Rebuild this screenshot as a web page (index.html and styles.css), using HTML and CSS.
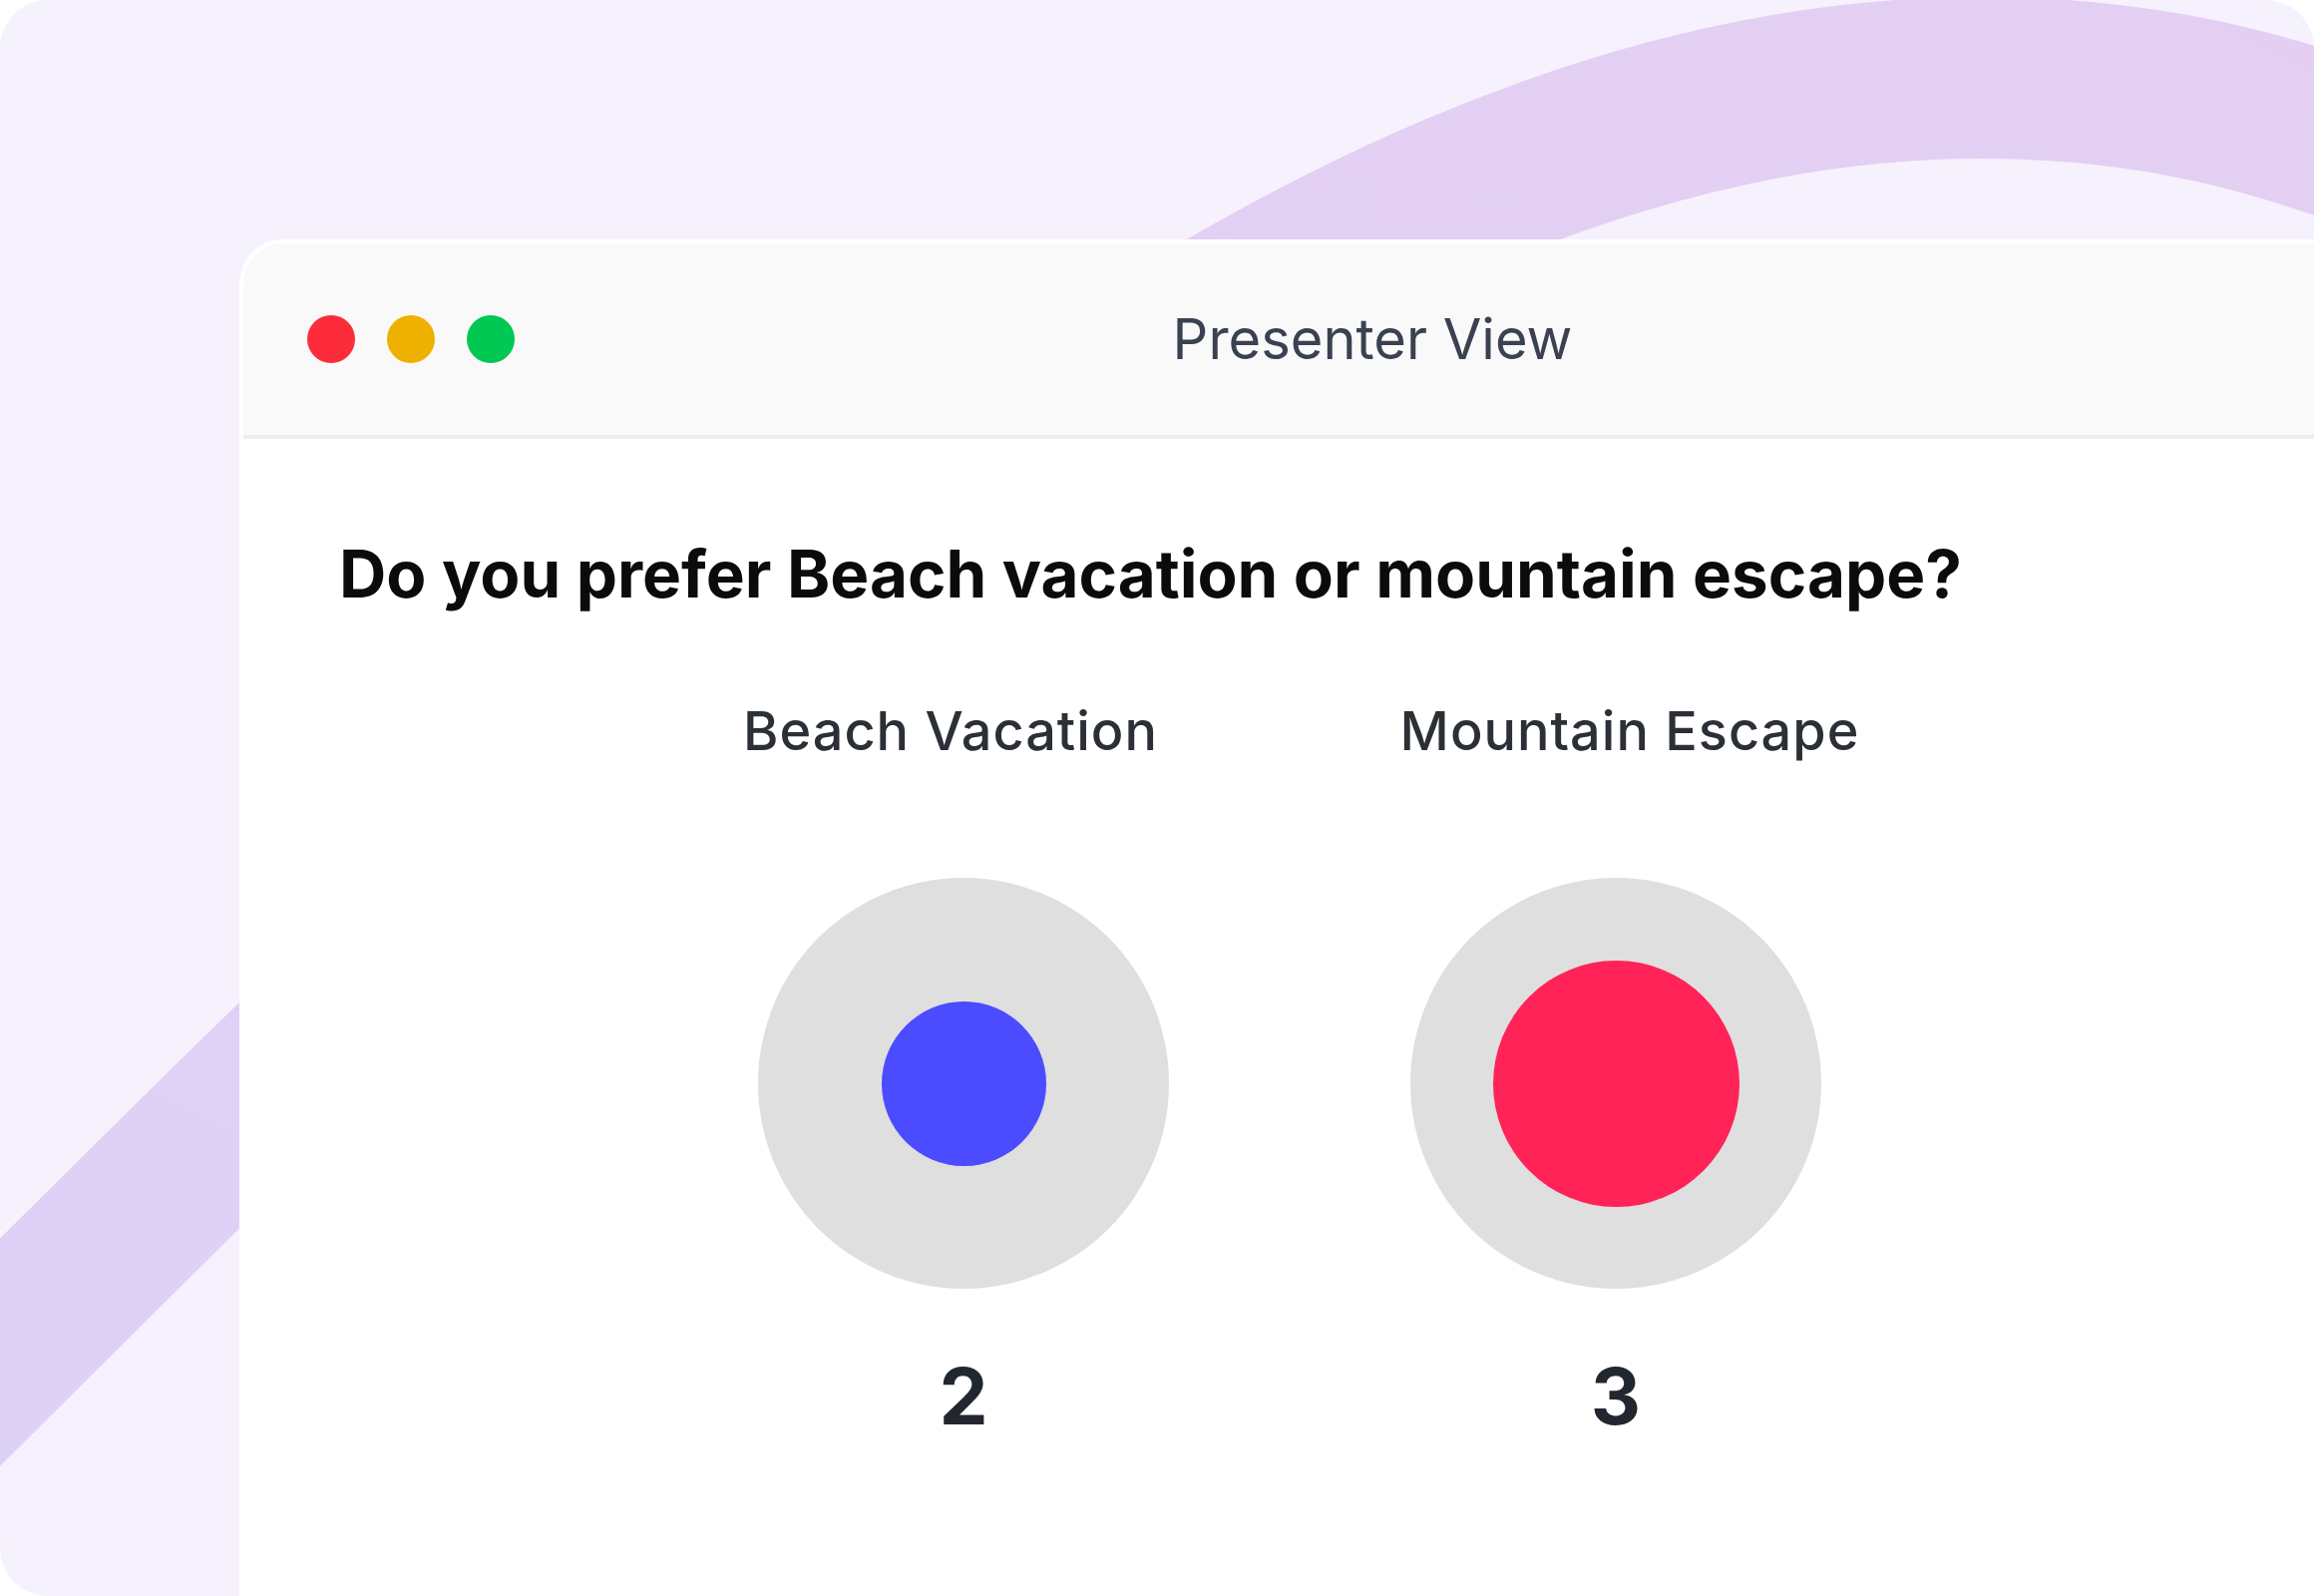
FILE: index.html
```html
<!DOCTYPE html>
<html lang="en">

<head>
	<title>Presenter View</title>
	<meta charset="utf-8" />
	<meta name="viewport" content="width=device-width,initial-scale=1" />
	<link rel="stylesheet" href="styles.css">
</head>

<body>
	<div class="frame">
		<svg class="backdrop" viewBox="0 0 2320 1600" aria-hidden="true">
			<defs>
				<linearGradient id="band" x1="0" y1="1" x2="1" y2="0">
					<stop offset="0" stop-color="#ded1f6" />
					<stop offset="1" stop-color="#e4cff2" />
				</linearGradient>
			</defs>
			<path d="M -100 1455 C 500 862, 1230 78, 1985 78 C 2150 78, 2300 108, 2520 210"
				fill="none" stroke="url(#band)" stroke-width="162" />
		</svg>

		<div class="window">
			<div class="titlebar">
				<div class="lights">
					<span class="light red"></span>
					<span class="light yellow"></span>
					<span class="light green"></span>
				</div>
				<div class="title">Presenter View</div>
				<div></div>
			</div>

			<div class="content">
				<h1 class="question">Do you prefer Beach vacation or mountain escape?</h1>

				<div class="labels">
					<div class="label">Beach Vacation</div>
					<div class="label">Mountain Escape</div>
				</div>

				<div class="results">
					<div class="option">
						<div class="ring">
							<div class="dot blue" style="width: 165px; height: 165px;"></div>
						</div>
						<div class="count">2</div>
					</div>
					<div class="option">
						<div class="ring">
							<div class="dot pink" style="width: 247px; height: 247px;"></div>
						</div>
						<div class="count">3</div>
					</div>
				</div>
			</div>
		</div>
	</div>
</body>

</html>
```

FILE: styles.css
```css
:root {
	--page-bg: #f6f2fd;
	--bar-bg: #f9f9f9;
	--line: #eeeeee;
	--ring: #dfdfdf;
	--text: #0b0b0c;
	--muted: #3a4150;
	--font: Inter, "Noto Sans", "DejaVu Sans", sans-serif;
}

*,
*:before,
*:after {
	box-sizing: border-box;
	margin: 0;
	padding: 0;
}

body {
	background-color: #ffffff;
	font-family: var(--font);
	color: var(--text);
}

.frame {
	position: relative;
	width: 2320px;
	height: 1600px;
	padding: 240px 0 0 240px;
	border-radius: 48px 48px 0 48px;
	background-color: var(--page-bg);
	overflow: hidden;
}

.backdrop {
	position: absolute;
	top: 0;
	left: 0;
	width: 2320px;
	height: 1600px;
}

.window {
	position: relative;
	width: 2268px;
	min-height: 1420px;
	border: 4px solid #ffffff;
	border-right: 0;
	border-radius: 44px 0 0 0;
	background-color: #ffffff;
}

.titlebar {
	display: grid;
	grid-template-columns: 1fr auto 1fr;
	align-items: center;
	height: 196px;
	padding: 0 64px;
	border-bottom: 4px solid var(--line);
	border-radius: 40px 0 0 0;
	background-color: var(--bar-bg);
}

.lights {
	display: flex;
	gap: 32px;
}

.light {
	width: 48px;
	height: 48px;
	border-radius: 50%;
}

.red {
	background-color: #fd2c3b;
}

.yellow {
	background-color: #efb100;
}

.green {
	background-color: #00c853;
}

.title {
	font-size: 56px;
	font-weight: 400;
	color: var(--muted);
}

.content {
	padding: 96px 0 0 96px;
}

.question {
	font-size: 65.5px;
	font-weight: 700;
	line-height: 80px;
}

/* option names sit on their own row, a little wider apart than the rings */
.labels {
	display: grid;
	grid-template-columns: repeat(2, 600px);
	column-gap: 81px;
	margin: 84px 0 0 313px;
	justify-items: center;
}

.label {
	font-size: 54px;
	font-weight: 500;
	line-height: 65px;
	letter-spacing: 1px;
	color: #2b2f36;
}

.results {
	display: grid;
	grid-template-columns: repeat(2, 600px);
	column-gap: 54px;
	margin: 115px 0 0 326px;
}

.option {
	display: flex;
	flex-direction: column;
	align-items: center;
}

.ring {
	display: flex;
	align-items: center;
	justify-content: center;
	width: 412px;
	height: 412px;
	border-radius: 50%;
	background-color: var(--ring);
}

.dot {
	border-radius: 50%;
}

.blue {
	background-color: #4b4bff;
}

.pink {
	background-color: #ff2357;
}

.count {
	margin-top: 61px;
	font-size: 78px;
	font-weight: 700;
	line-height: 94px;
	color: #22262e;
}
```
